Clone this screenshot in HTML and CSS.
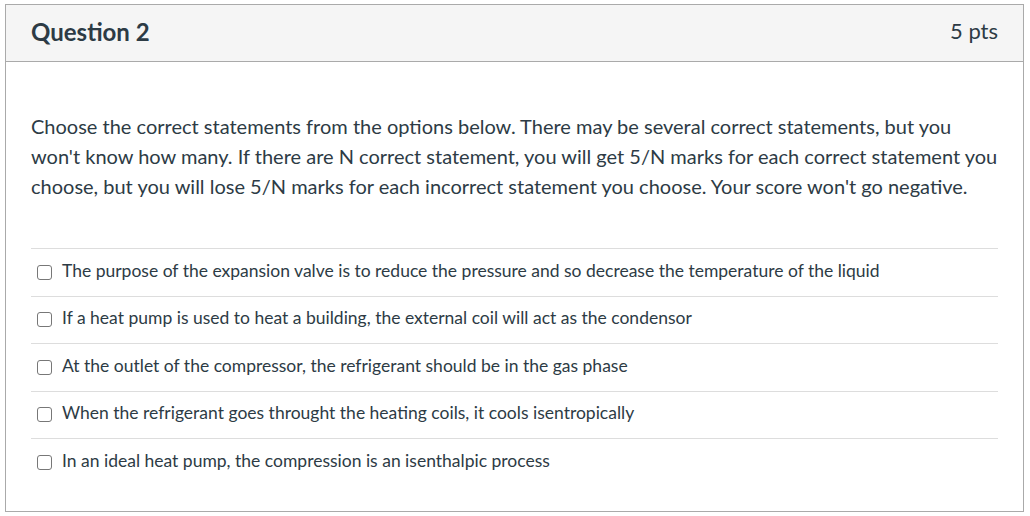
FILE: index.html
```html
<!DOCTYPE html>
<html lang="en">
<head>
    <meta charset="UTF-8">
    <meta name="viewport" content="width=device-width, initial-scale=1.0">
    <title>Question 2</title>
    <link rel="stylesheet" href="styles.css">
</head>
<body>
    <div class="question">
        <div class="header">
            <span class="title">Question 2</span>
            <span class="points">5 pts</span>
        </div>
        <div class="content">
            <p class="text">Choose the correct statements from the options below. There may be several correct statements, but you won't know how many. If there are N correct statement, you will get 5/N marks for each correct statement you choose, but you will lose 5/N marks for each incorrect statement you choose. Your score won't go negative.</p>
            <div class="answers">
                <label class="answer"><span class="box"></span>The purpose of the expansion valve is to reduce the pressure and so decrease the temperature of the liquid</label>
                <label class="answer"><span class="box"></span>If a heat pump is used to heat a building, the external coil will act as the condensor</label>
                <label class="answer"><span class="box"></span>At the outlet of the compressor, the refrigerant should be in the gas phase</label>
                <label class="answer"><span class="box"></span>When the refrigerant goes throught the heating coils, it cools isentropically</label>
                <label class="answer"><span class="box"></span>In an ideal heat pump, the compression is an isenthalpic process</label>
            </div>
        </div>
    </div>
</body>
</html>
```

FILE: styles.css
```css
body {
    margin: 4px 0 0 5px;
    font-family: Lato, "Open Sans", sans-serif;
    color: #2d3b45;
    background: #fff;
}

.question {
    width: 1019px;
    height: 508px;
    box-sizing: border-box;
    border: 1px solid #aaa;
}

.header {
    height: 57px;
    box-sizing: border-box;
    border-bottom: 1px solid #aaa;
    background-color: #f5f5f5;
    display: flex;
    align-items: center;
    justify-content: space-between;
    padding: 0 25px 3px;
}

.title {
    font-size: 24px;
    font-weight: bold;
}

.points {
    font-size: 22px;
    margin-bottom: 2px;
}

.content {
    padding: 49px 25px 0;
}

.text {
    margin: 0;
    font-size: 20px;
    line-height: 30px;
}

.answers {
    margin-top: 47px;
}

.answer {
    display: flex;
    align-items: center;
    height: 47.5px;
    box-sizing: border-box;
    border-top: 1px solid #ddd;
    font-size: 17.5px;
    padding-bottom: 4px;
}

.box {
    width: 13px;
    height: 13px;
    border: 1px solid #777;
    border-radius: 3px;
    margin: 4px 10px 0 6px;
    flex: none;
    background: #fff;
}
```
